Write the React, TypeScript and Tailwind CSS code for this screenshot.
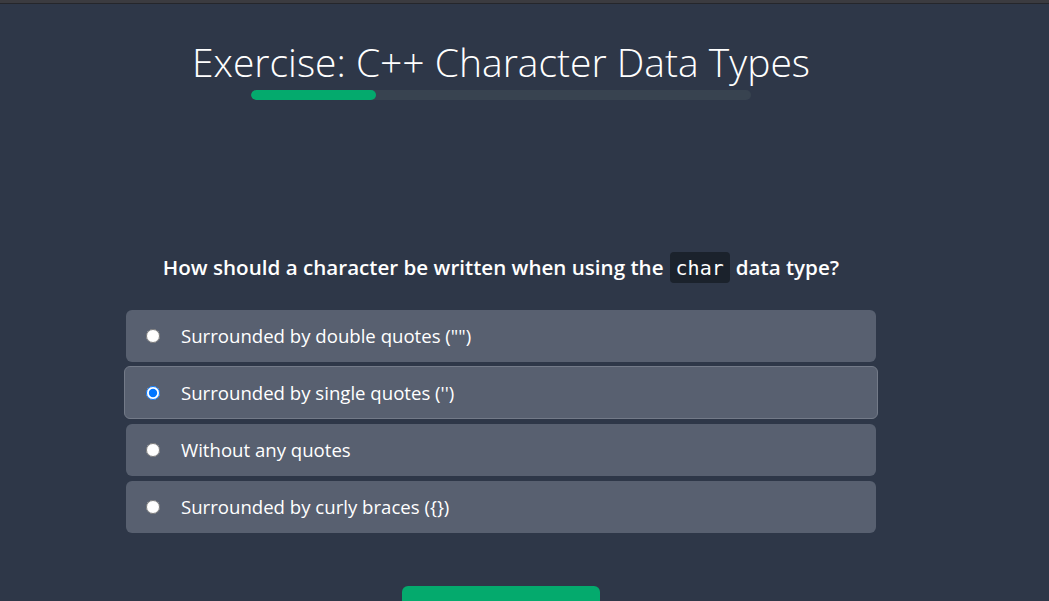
import React from "react";

const options = [
  "Surrounded by double quotes (\"\")",
  "Surrounded by single quotes ('')",
  "Without any quotes",
  "Surrounded by curly braces ({})",
];

export default function App() {
  return (
    <div className="min-h-screen bg-[#2e3748] overflow-hidden">
      <div className="h-[3px] bg-[#3b3b40]" />
      <div className="h-px bg-[#25262b]" />
      <div className="w-[1002px] flex flex-col items-center">
        <h1
          className="mt-[33px] text-[39px] leading-[50px] font-light text-white"
          style={{ fontFamily: '"Open Sans", sans-serif' }}
        >
          Exercise: C++ Character Data Types
        </h1>
        <div className="mt-[3px] w-[500px] h-[10px] rounded-full bg-[#384350] overflow-hidden">
          <div className="h-full w-[125px] rounded-full bg-[#04aa6d]" />
        </div>
        <div
          className="mt-[152px] flex items-center text-[20.6px] font-semibold text-white"
          style={{ fontFamily: '"Open Sans", sans-serif' }}
        >
          <span>How should a character be written when using the</span>
          <code
            className="mx-[6px] px-[6px] h-[31px] flex items-center rounded-[4px] bg-[#1b222c] text-[20px] font-normal"
            style={{ fontFamily: '"DejaVu Sans Mono", monospace' }}
          >
            char
          </code>
          <span>data type?</span>
        </div>
        <div className="mt-[27px] w-[750px] flex flex-col gap-[5px]">
          {options.map((o, i) => (
            <label
              key={o}
              className={
                i === 1
                  ? "-mt-px -mx-[2px] h-[53px] flex items-center pl-[21px] rounded-[6px] bg-[#586070] border border-[#737a88] text-white"
                  : "h-[52px] flex items-center pl-[20px] rounded-[6px] bg-[#586070] text-white"
              }
              style={{ fontFamily: '"Open Sans", sans-serif' }}
            >
              <input
                type="radio"
                name="q"
                defaultChecked={i === 1}
                className="m-0 w-[14px] h-[14px]"
              />
              <span className="ml-[21px] text-[18.6px]">{o}</span>
            </label>
          ))}
        </div>
        <button className="mt-[53px] w-[198px] h-[46px] rounded-[6px] bg-[#04aa6d] text-white text-[18px]" />
      </div>
    </div>
  );
}
